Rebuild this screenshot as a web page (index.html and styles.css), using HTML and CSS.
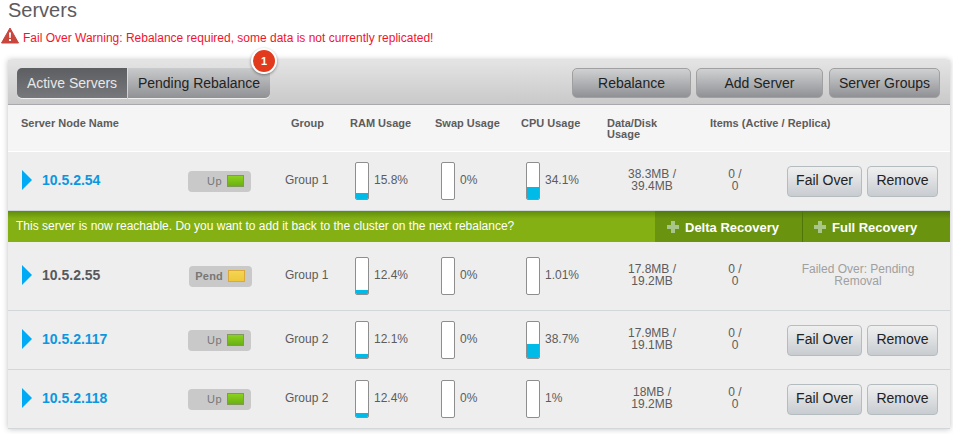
FILE: index.html
```html
<!DOCTYPE html>
<html lang="en">
	<head>
		<meta name="viewport" content="width=device-width, initial-scale=1">
		<title>Servers</title>
		<link rel="stylesheet" href="styles.css">
	</head>

	<body>
		<h1 class="title">Servers</h1>
		<div class="warning">
			<svg class="warn-icon" width="18" height="17" viewBox="0 0 18 17">
				<path d="M9 1 L17.5 16 L0.5 16 Z" fill="#c8463c" stroke="#c8463c" stroke-width="1" stroke-linejoin="round"/>
				<path d="M8 5.5 H10 L9.7 11 H8.3 Z" fill="#fff"/>
				<rect x="8" y="12" width="2" height="2" fill="#fff"/>
			</svg>
			<span class="warning-text">Fail Over Warning: Rebalance required, some data is not currently replicated!</span>
		</div>

		<div class="panel">
			<div class="toolbar">
				<div class="tabs">
					<a class="tab tab-active">Active Servers</a>
					<a class="tab">Pending Rebalance<span class="count">1</span></a>
				</div>
				<div class="tool-buttons">
					<a class="tool-btn btn-rebalance">Rebalance</a>
					<a class="tool-btn btn-add">Add Server</a>
					<a class="tool-btn btn-groups">Server Groups</a>
				</div>
			</div>

			<div class="head">
				<div>Server Node Name</div>
				<div>Group</div>
				<div>RAM Usage</div>
				<div>Swap Usage</div>
				<div>CPU Usage</div>
				<div class="head-disk">Data/Disk Usage</div>
				<div>Items (Active / Replica)</div>
			</div>

			<div class="row">
				<div class="name"><i class="arrow"></i><a>10.5.2.54</a></div>
				<div><span class="status">Up<i class="light"></i></span></div>
				<div class="group">Group 1</div>
				<div class="usage"><div class="bar"><div class="fill" style="height: 15.8%"></div></div><span class="pct">15.8%</span></div>
				<div class="usage"><div class="bar"></div><span class="pct">0%</span></div>
				<div class="usage"><div class="bar"><div class="fill" style="height: 34.1%"></div></div><span class="pct">34.1%</span></div>
				<div class="cell-center">38.3MB /<br>39.4MB</div>
				<div class="cell-center">0 /<br>0</div>
				<div class="actions"><a class="btn btn-failover">Fail Over</a><a class="btn btn-remove">Remove</a></div>
			</div>

			<div class="notice">
				<div class="notice-text">This server is now reachable. Do you want to add it back to the cluster on the next rebalance?</div>
				<a class="recovery recovery-delta"><i class="plus"></i>Delta Recovery</a>
				<a class="recovery recovery-full"><i class="plus"></i>Full Recovery</a>
			</div>

			<div class="row row-pending">
				<div class="name"><i class="arrow"></i><a>10.5.2.55</a></div>
				<div><span class="status status-pend">Pend<i class="light"></i></span></div>
				<div class="group">Group 1</div>
				<div class="usage"><div class="bar"><div class="fill" style="height: 12.4%"></div></div><span class="pct">12.4%</span></div>
				<div class="usage"><div class="bar"></div><span class="pct">0%</span></div>
				<div class="usage"><div class="bar"><div class="fill" style="height: 1.01%"></div></div><span class="pct">1.01%</span></div>
				<div class="cell-center">17.8MB /<br>19.2MB</div>
				<div class="cell-center">0 /<br>0</div>
				<div class="pending-note">Failed Over: Pending Removal</div>
			</div>

			<div class="row">
				<div class="name"><i class="arrow"></i><a>10.5.2.117</a></div>
				<div><span class="status">Up<i class="light"></i></span></div>
				<div class="group">Group 2</div>
				<div class="usage"><div class="bar"><div class="fill" style="height: 12.1%"></div></div><span class="pct">12.1%</span></div>
				<div class="usage"><div class="bar"></div><span class="pct">0%</span></div>
				<div class="usage"><div class="bar"><div class="fill" style="height: 38.7%"></div></div><span class="pct">38.7%</span></div>
				<div class="cell-center">17.9MB /<br>19.1MB</div>
				<div class="cell-center">0 /<br>0</div>
				<div class="actions"><a class="btn btn-failover">Fail Over</a><a class="btn btn-remove">Remove</a></div>
			</div>

			<div class="row">
				<div class="name"><i class="arrow"></i><a>10.5.2.118</a></div>
				<div><span class="status">Up<i class="light"></i></span></div>
				<div class="group">Group 2</div>
				<div class="usage"><div class="bar"><div class="fill" style="height: 12.4%"></div></div><span class="pct">12.4%</span></div>
				<div class="usage"><div class="bar"></div><span class="pct">0%</span></div>
				<div class="usage"><div class="bar"><div class="fill" style="height: 1%"></div></div><span class="pct">1%</span></div>
				<div class="cell-center">18MB /<br>19.2MB</div>
				<div class="cell-center">0 /<br>0</div>
				<div class="actions"><a class="btn btn-failover">Fail Over</a><a class="btn btn-remove">Remove</a></div>
			</div>
		</div>
	</body>

</html>
```

FILE: styles.css
```css
* {
	box-sizing: border-box;
}
html {
	background: white;
	color: #5c5c5c;
	font-family: "Liberation Sans", Arial, sans-serif;
	font-size: 12px;
}
body {
	margin: 0;
	height: 434px;
	overflow: hidden;
}
.title {
	margin: 0 0 0 8px;
	height: 26px;
	font-size: 20px;
	font-weight: normal;
	line-height: 20px;
	color: #5b5b60;
}
.warning {
	display: flex;
	align-items: flex-start;
	gap: 4px;
	height: 20px;
	padding-left: 1px;
	font-size: 12px;
	color: #f0142d;
}
.warn-icon {
	margin-top: 1px;
}
.warning-text {
	padding-top: 5px;
}
.panel {
	margin: 14px 3px 0 8px;
	background: #eee;
	box-shadow: 0 0 6px rgba(0, 0, 0, 0.25);
}

/* toolbar */
.toolbar {
	display: flex;
	justify-content: space-between;
	height: 45px;
	padding: 8px 10px 0 9px;
	background: linear-gradient(#e4e4e4, #c9c9c9);
	border-bottom: 1px solid #a9a9ad;
}
.tabs {
	display: flex;
	height: 30px;
	gap: 1px;
	border-radius: 5px;
}
.tab {
	position: relative;
	display: flex;
	align-items: center;
	justify-content: center;
	width: 142px;
	font-size: 14px;
	color: #222;
	background: linear-gradient(#c9cacc, #8f9194);
	border-radius: 0 5px 5px 0;
	box-shadow: 0 1px 0 #eee;
}
.tab-active {
	width: 110px;
	color: #e8e8e8;
	background: linear-gradient(#5d5e61, #77787b);
	border-radius: 5px 0 0 5px;
}
.count {
	position: absolute;
	top: -20px;
	right: -7px;
	width: 26px;
	height: 26px;
	border: 2px solid white;
	border-radius: 50%;
	background: #e23a1c;
	color: white;
	font-size: 11px;
	font-weight: bold;
	line-height: 22px;
	text-align: center;
	box-shadow: 0 1px 3px rgba(0, 0, 0, 0.4);
}
.tool-buttons {
	display: flex;
	gap: 5px;
}
.tool-btn {
	display: flex;
	align-items: center;
	justify-content: center;
	height: 30px;
	font-size: 14px;
	color: #222;
	background: linear-gradient(#d0d1d3, #8f9194);
	border: 1px solid #a0a0a0;
	border-radius: 5px;
}
.btn-rebalance {
	width: 119px;
}
.btn-add {
	width: 127px;
}
.btn-groups {
	width: 111px;
	margin-left: 1px;
}

/* table */
.head {
	display: grid;
	grid-template-columns: 270px 59px 85px 86px 86px 103px 1fr;
	height: 47px;
	padding: 13px 0 0 13px;
	background: #f5f5f5;
	border-bottom: 1px solid white;
	font-size: 11px;
	font-weight: bold;
	line-height: 11px;
	color: #5c5c5c;
}
.head-disk {
	width: 60px;
}
.row {
	display: grid;
	grid-template-columns: 166px 97px 70px 86px 85px 70px 112px 54px 1fr;
	align-items: center;
	height: 59px;
	padding-left: 14px;
	background: #eee;
	border-bottom: 1px solid #d2d8da;
}
.row-pending {
	height: 69px;
}
.name {
	display: flex;
	align-items: center;
	gap: 10px;
	padding-bottom: 2px;
	font-size: 14px;
	font-weight: bold;
	color: #0d96e0;
}
.row-pending .name {
	color: #58585c;
}
.arrow {
	width: 0;
	height: 0;
	border-top: 10px solid transparent;
	border-bottom: 10px solid transparent;
	border-left: 10px solid #00aaf5;
}
.status {
	display: flex;
	align-items: center;
	justify-content: flex-end;
	gap: 5px;
	width: 63px;
	height: 21px;
	padding-right: 7px;
	background: #c9c9c9;
	border-radius: 4px;
	font-size: 11px;
	letter-spacing: 0.5px;
	color: #777;
}
.status-pend {
	margin-left: 1px;
	font-weight: bold;
	letter-spacing: 0.2px;
}
.light {
	width: 17px;
	height: 12px;
	background: linear-gradient(#8ad21e, #6bb014);
	border: 1px solid #7f9a56;
}
.status-pend .light {
	background: linear-gradient(#f4d552, #eec83c);
	border-color: #d9a93a;
}
.group {
	padding-bottom: 2px;
	font-size: 12px;
}
.usage {
	display: flex;
	align-items: center;
	gap: 5px;
	font-size: 12px;
}
.pct {
	padding-bottom: 2px;
}
.bar {
	display: flex;
	flex-direction: column;
	justify-content: flex-end;
	flex: none;
	width: 14px;
	height: 38px;
	background: white;
	border: 1px solid #8e8e8e;
	border-radius: 2px;
	overflow: hidden;
}
.fill {
	background: #00bbe8;
}
.cell-center {
	padding-bottom: 2px;
	font-size: 12px;
	line-height: 12px;
	text-align: center;
}
.actions {
	display: flex;
	justify-content: flex-end;
	gap: 5px;
	padding-right: 12px;
}
.btn {
	display: flex;
	align-items: center;
	justify-content: center;
	height: 31px;
	padding-bottom: 2px;
	font-size: 14px;
	color: #222;
	background: linear-gradient(#f0f0f0, #c8ccd0);
	border: 1px solid #b4bcc0;
	border-radius: 4px;
}
.btn-failover {
	width: 75px;
}
.btn-remove {
	width: 71px;
}
.pending-note {
	width: 140px;
	margin-left: 26px;
	padding-bottom: 2px;
	font-size: 12px;
	line-height: 12px;
	text-align: center;
	color: #a0a0a0;
}

/* green bar */
.notice {
	display: flex;
	height: 31px;
	background: linear-gradient(#5f8c0c, #84b014 25%);
	color: white;
}
.notice-text {
	flex: 1;
	padding: 8px 0 0 8px;
	font-size: 12px;
}
.recovery {
	display: flex;
	align-items: center;
	gap: 6px;
	width: 148px;
	padding: 1px 0 0 11px;
	background: linear-gradient(#527a0c, #6a9310 25%);
	font-size: 13px;
	font-weight: bold;
}
.recovery-full {
	border-left: 1px solid #4f7408;
}
.recovery-delta {
	width: 147px;
	padding-left: 12px;
}
.plus {
	width: 12px;
	height: 12px;
	margin-bottom: 1px;
	background:
		linear-gradient(#a9c58a, #a9c58a) center / 4px 100% no-repeat,
		linear-gradient(#a9c58a, #a9c58a) center / 100% 4px no-repeat;
}
```
